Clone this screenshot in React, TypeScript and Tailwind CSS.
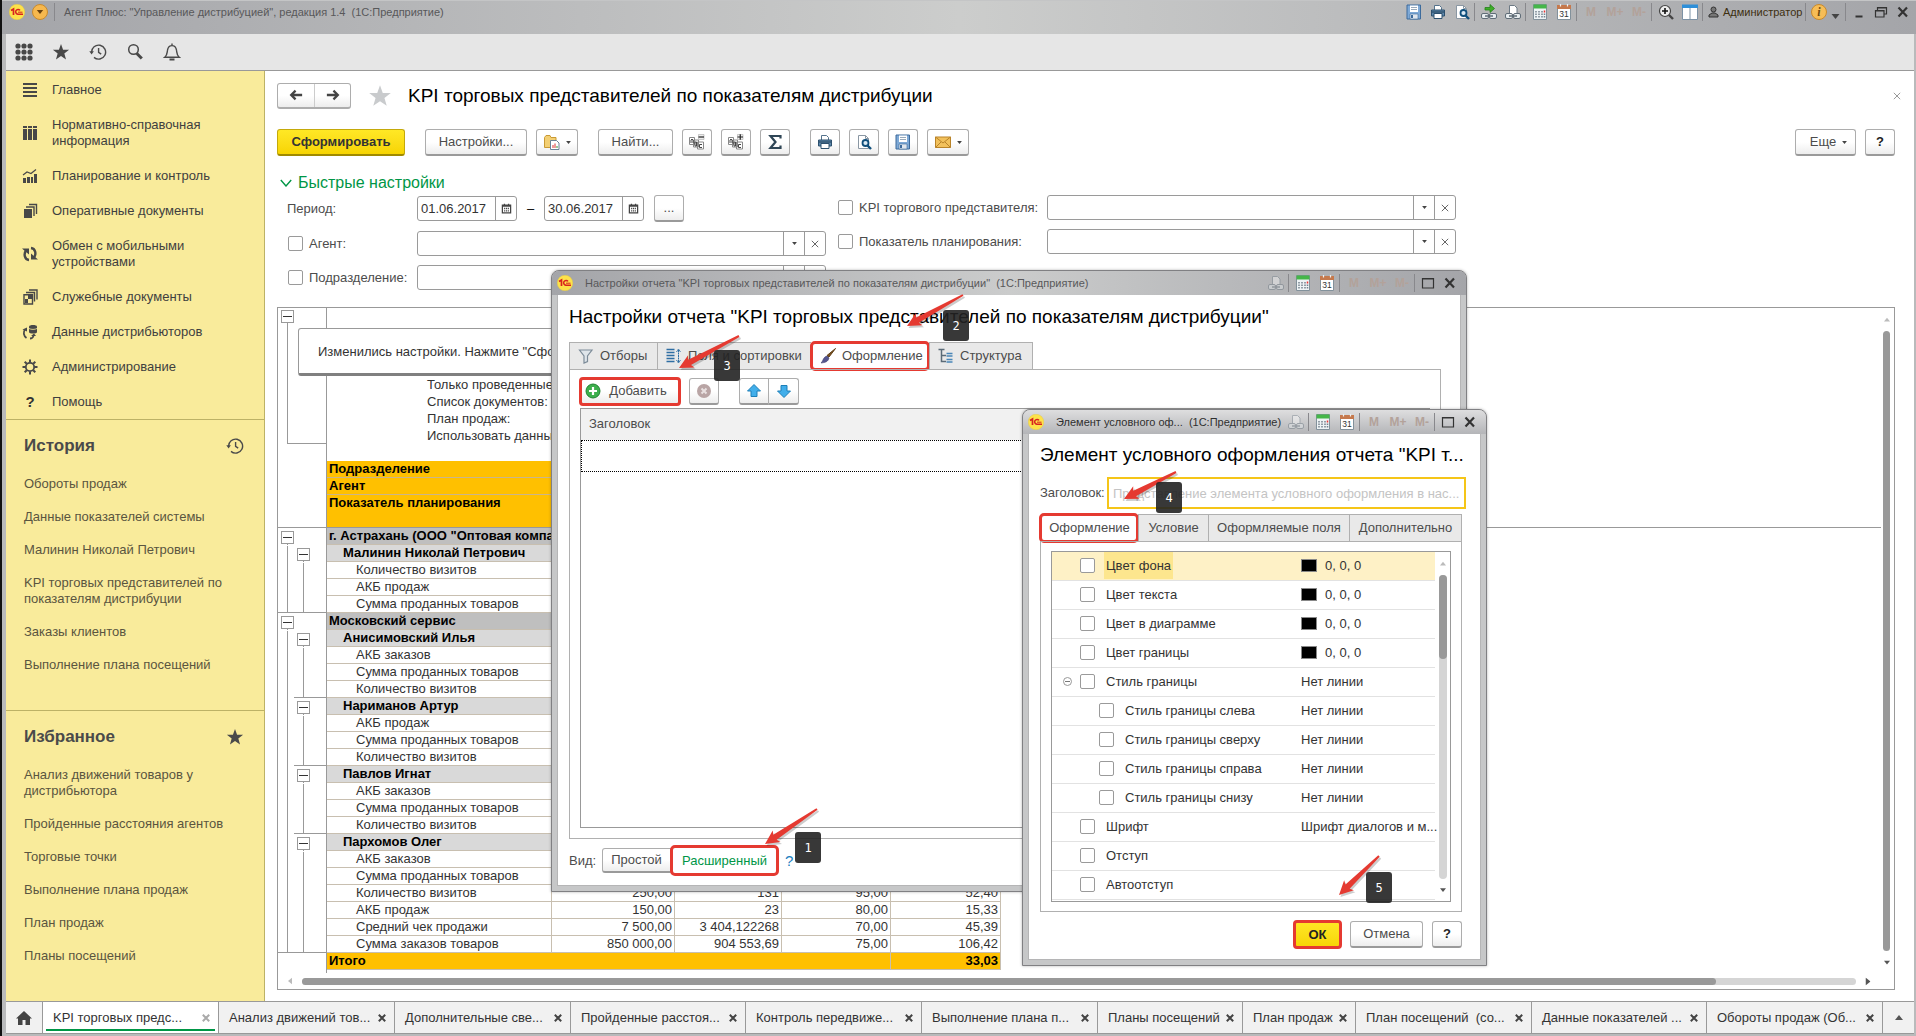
import { useState, type ReactNode } from "react";
import clsx from "clsx";

const NAV = [
  { label: "Главное", icon: "lines" },
  { label: "Нормативно-справочная информация", icon: "books" },
  { label: "Планирование и контроль", icon: "bars" },
  { label: "Оперативные документы", icon: "docs" },
  { label: "Обмен с мобильными устройствами", icon: "sync" },
  { label: "Служебные документы", icon: "docs2" },
  { label: "Данные дистрибьюторов", icon: "db" },
  { label: "Администрирование", icon: "gear" },
  { label: "Помощь", icon: "help" },
];

const HISTORY = [
  "Обороты продаж",
  "Данные показателей системы",
  "Малинин Николай Петрович",
  "KPI торговых представителей по показателям дистрибуции",
  "Заказы клиентов",
  "Выполнение плана посещений",
];

const FAVORITES = [
  "Анализ движений товаров у дистрибьютора",
  "Пройденные расстояния агентов",
  "Торговые точки",
  "Выполнение плана продаж",
  "План продаж",
  "Планы посещений",
];

type Tree = "" | "box" | "line" | "end";

interface ReportRow {
  a: Tree;
  b: Tree;
  level: 0 | 1 | 2;
  name: string;
  values?: string[];
}

const ROWS: ReportRow[] = [
  { a: "box", b: "", level: 0, name: 'г. Астрахань (ООО "Оптовая компания")' },
  { a: "line", b: "box", level: 1, name: "Малинин Николай Петрович" },
  { a: "line", b: "line", level: 2, name: "Количество визитов" },
  { a: "line", b: "line", level: 2, name: "АКБ продаж" },
  { a: "end", b: "end", level: 2, name: "Сумма проданных товаров" },
  { a: "box", b: "", level: 0, name: "Московский сервис" },
  { a: "line", b: "box", level: 1, name: "Анисимовский Илья" },
  { a: "line", b: "line", level: 2, name: "АКБ заказов" },
  { a: "line", b: "line", level: 2, name: "Сумма проданных товаров" },
  { a: "line", b: "end", level: 2, name: "Количество визитов" },
  { a: "line", b: "box", level: 1, name: "Нариманов Артур" },
  { a: "line", b: "line", level: 2, name: "АКБ продаж" },
  { a: "line", b: "line", level: 2, name: "Сумма проданных товаров" },
  { a: "line", b: "end", level: 2, name: "Количество визитов" },
  { a: "line", b: "box", level: 1, name: "Павлов Игнат" },
  { a: "line", b: "line", level: 2, name: "АКБ заказов" },
  { a: "line", b: "line", level: 2, name: "Сумма проданных товаров" },
  { a: "line", b: "end", level: 2, name: "Количество визитов" },
  { a: "line", b: "box", level: 1, name: "Пархомов Олег" },
  { a: "line", b: "line", level: 2, name: "АКБ заказов" },
  { a: "line", b: "line", level: 2, name: "Сумма проданных товаров" },
  { a: "line", b: "line", level: 2, name: "Количество визитов", values: ["250,00", "131", "95,00", "52,40"] },
  { a: "line", b: "line", level: 2, name: "АКБ продаж", values: ["150,00", "23", "80,00", "15,33"] },
  { a: "line", b: "line", level: 2, name: "Средний чек продажи", values: ["7 500,00", "3 404,122268", "70,00", "45,39"] },
  { a: "end", b: "end", level: 2, name: "Сумма заказов товаров", values: ["850 000,00", "904 553,69", "75,00", "106,42"] },
];

const APPEARANCE = [
  { label: "Цвет фона", value: "0, 0, 0", color: true, selected: true },
  { label: "Цвет текста", value: "0, 0, 0", color: true },
  { label: "Цвет в диаграмме", value: "0, 0, 0", color: true },
  { label: "Цвет границы", value: "0, 0, 0", color: true },
  { label: "Стиль границы", value: "Нет линии", group: true },
  { label: "Стиль границы слева", value: "Нет линии", child: true },
  { label: "Стиль границы сверху", value: "Нет линии", child: true },
  { label: "Стиль границы справа", value: "Нет линии", child: true },
  { label: "Стиль границы снизу", value: "Нет линии", child: true },
  { label: "Шрифт", value: "Шрифт диалогов и м..." },
  { label: "Отступ", value: "" },
  { label: "Автоотступ", value: "" },
];

const WINDOW_TABS = [
  { label: "KPI торговых предс...", width: "w-44", active: true },
  { label: "Анализ движений тов...", width: "w-44" },
  { label: "Дополнительные све...", width: "w-44" },
  { label: "Пройденные расстоя...", width: "w-[175px]" },
  { label: "Контроль передвиже...", width: "w-44" },
  { label: "Выполнение плана п...", width: "w-44" },
  { label: "Планы посещений", width: "w-[145px]" },
  { label: "План продаж", width: "w-[113px]" },
  { label: "План посещений\u00a0 (со...", width: "w-44" },
  { label: "Данные показателей ...", width: "w-[175px]" },
  { label: "Обороты продаж (Об...", width: "w-44" },
];

// tail and tip of each arrow, then the corner of its number plate
const CALLOUTS = [
  { n: 1, tail: [817, 809], tip: [765, 844], plate: [795, 832] },
  { n: 2, tail: [963, 295], tip: [907, 326], plate: [943, 310] },
  { n: 3, tail: [739, 336], tip: [679, 368], plate: [714, 350] },
  { n: 4, tail: [1176, 472], tip: [1124, 499], plate: [1156, 482] },
  { n: 5, tail: [1379, 856], tip: [1339, 895], plate: [1366, 872] },
];

/* ---------- icons ---------- */

function Logo() {
  return (
    <svg viewBox="0 0 16 16" className="size-4 shrink-0">
      <circle cx="8" cy="8" r="7.8" fill="#fde24a" stroke="#e3c545" strokeWidth="0.4" />
      <path d="M2 6.400 4.500 5v6" fill="none" stroke="#d8231f" strokeWidth="1.700" />
      <path d="M11 6.400A2.400 2.400 0 1 0 8.800 10.200H14" fill="none" stroke="#d8231f" strokeWidth="1.500" />
      <path d="M9 8.200h4.500" fill="none" stroke="#d8231f" />
    </svg>
  );
}

function Star({ className }: { className: string }) {
  return (
    <svg viewBox="0 0 20 20" className={clsx("shrink-0", className)} fill="currentColor">
      <path d="M10 1l2.3 6.4 6.7.2-5.3 4.1 1.9 6.5L10 14.4l-5.6 3.8 1.9-6.5L1 7.6l6.7-.2z" />
    </svg>
  );
}

function HistoryIcon({ className }: { className?: string }) {
  return (
    <svg viewBox="0 0 18 18" className={clsx("size-[18px] shrink-0", className)} fill="none" stroke="#4a4a4a" strokeWidth="1.4">
      <path d="M2.6 9.4A7 7 0 1 1 5 14.4" />
      <path d="M0.3 8.2h4.6L2.6 11.4z" fill="#4a4a4a" stroke="none" />
      <path d="M9.6 5v4.4l2.6 1.8" />
    </svg>
  );
}

function NavIcon({ name }: { name: string }) {
  if (name === "help") return <span className="w-4 shrink-0 text-center text-[15px] font-bold text-[#333]">?</span>;
  return (
    <svg viewBox="0 0 16 16" className="size-4 shrink-0" fill="#484848">
      {name === "lines" && <path d="M1 1h14v2H1zM1 5h14v2H1zM1 9h14v2H1zM1 13h14v2H1z" />}
      {name === "books" && <path d="M1 1h4v2H1zM6 1h4v2H6zM11 1h4v2h-4zM1 4h4v11H1zM6 4h4v11H6zM11 4h4v11h-4z" />}
      {name === "bars" && (
        <>
          <path d="M1 10h3v5H1zM5 9h3v6H5zM9 9h2v6H9zM12 6h3v9h-3z" />
          <path d="M1 7l4-3 4 1.500 5-4" fill="none" stroke="#484848" strokeWidth="1.2" />
        </>
      )}
      {name === "docs" && (
        <>
          <path d="M2 6h8v9H2z" />
          <path d="M4 4h8v9M7 1.500h7.500V11" fill="none" stroke="#484848" strokeWidth="1.4" />
        </>
      )}
      {name === "docs2" && (
        <>
          <path d="M2 5.700h8.500V15H2z" fill="none" stroke="#484848" strokeWidth="1.4" />
          <path d="M6 6h4v4H6zM3 10h3v4H3z" />
          <path d="M4 3.500h8.500v9M7 1h8v9.500" fill="none" stroke="#484848" strokeWidth="1.4" />
        </>
      )}
      {name === "sync" && (
        <>
          <path d="M7 14C2.500 13.500 1.500 8 4 4.500M9 2c4.500.5 5.500 6 3 9.500" fill="none" stroke="#484848" strokeWidth="2.4" />
          <path d="M0 2.500h7v6zM16 13.500H9v-6z" />
        </>
      )}
      {name === "db" && (
        <>
          <path d="M7 2.500C7 .5 15 .5 15 2.500V8c0 2-8 2-8 0z" />
          <path d="M7 4.500c2 1.200 6 1.200 8 0" fill="none" stroke="#f9eb9b" strokeWidth="0.8" />
          <path d="M4.500 14C1.500 12 1 8 3 5.500M8 14.500c2.500 0 3-1 3.500-2.500" fill="none" stroke="#484848" strokeWidth="1.8" />
          <path d="M0.500 5.500 5 3.500v4zM9 12h5l-2-2.500z" />
        </>
      )}
      {name === "gear" && (
        <>
          <circle cx="8" cy="8" r="4.200" fill="none" stroke="#484848" strokeWidth="1.8" />
          <path d="M8 .5v3M8 12.500v3M.5 8h3M12.500 8h3M2.700 2.700l2.100 2.100M11.200 11.200l2.100 2.100M2.700 13.300l2.100-2.100M11.200 4.800l2.100-2.100" stroke="#484848" strokeWidth="2" />
        </>
      )}
    </svg>
  );
}

function Glyph({ name, dim, className }: { name: string; dim?: boolean; className?: string }) {
  return (
    <svg viewBox="0 0 16 16" className={clsx("shrink-0", className ?? "size-4", dim && "opacity-40")} fill="none">
      {name === "disk" && (
        <>
          <path d="M1 1h13.500v14H1z" fill="#7ea9d6" stroke="#3d6b9c" />
          <path d="M4 1.500h8V8H4z" fill="#fff" />
          <path d="M5 3.500h6M5 5.500h6" stroke="#9ab" />
          <path d="M4 10h8v5H4z" fill="#dfe6ee" stroke="#3d6b9c" strokeWidth="0.6" />
          <path d="M5 11h2v3H5z" fill="#3d6b9c" />
        </>
      )}
      {name === "printer" && (
        <>
          <path d="M4.500 6V1.500h5l2 2V6" fill="#fff" stroke="#54728c" />
          <path d="M1.500 6h13v6h-13z" fill="#5f89ad" stroke="#2d506e" />
          <path d="M2 8h12" stroke="#1f3c55" />
          <path d="M4 9.500h8v5H4z" fill="#fff" stroke="#2d506e" />
        </>
      )}
      {name === "preview" && (
        <>
          <path d="M2.500 1.500h7l3 3v10h-10z" fill="#fff" stroke="#8a97a3" />
          <path d="M9.500 1.500v3h3" stroke="#8a97a3" />
          <circle cx="9.500" cy="9" r="3" stroke="#0f4f7c" strokeWidth="1.800" fill="#dbeaf5" />
          <path d="M11.500 11.500 15 15" stroke="#0f4f7c" strokeWidth="2.400" />
        </>
      )}
      {(name === "link" || name === "linkdoc") && (
        <>
          {name === "link" ? (
            <path d="M4 3.500h5V.5L13.500 4.500 9 8.500V6H4z" fill="#3fae2a" stroke="#23801a" strokeWidth="0.800" />
          ) : (
            <path d="M4.500 10V1.500h5l2.500 2.500v6" fill="#fff" stroke="#6d7a85" />
          )}
          <rect x=".5" y="9.500" width="7" height="5" rx="1.500" fill="#e8edf0" stroke="#5f6c77" />
          <rect x="8.500" y="9.500" width="7" height="5" rx="1.500" fill="#e8edf0" stroke="#5f6c77" />
          <path d="M4 12h8" stroke="#5f6c77" strokeWidth="1.500" />
        </>
      )}
      {name === "calc" && (
        <>
          <path d="M1.500.5h13v15h-13z" fill="#eef3f5" stroke="#82919b" />
          <path d="M1.500.5h13v4h-13z" fill="#45b649" />
          <path d="M4 7v7M7 7v7M10 7v7" stroke="#75838d" strokeWidth="1.500" strokeDasharray="1.500 1" />
          <path d="M12.500 6.500v2" stroke="#e33" strokeWidth="1.500" />
          <path d="M12.500 9.500v4" stroke="#75838d" strokeWidth="1.500" strokeDasharray="1.500 1" />
        </>
      )}
      {name === "calendar" && (
        <>
          <path d="M1.500 1.500h13v14h-13z" fill="#fff" stroke="#82919b" />
          <path d="M1 1h14v4H1z" fill="#c5794d" />
          <path d="M4.500 0v2.500M11.500 0v2.500" stroke="#eee" strokeWidth="1.200" />
          <text x="8" y="13" textAnchor="middle" fontSize="8.500" fill="#333">31</text>
        </>
      )}
      {name === "zoom" && (
        <>
          <circle cx="7" cy="7" r="5.500" fill="#eee" stroke="#444" strokeWidth="1.200" />
          <path d="M4 7h6M7 4v6" stroke="#111" strokeWidth="1.600" />
          <path d="M11 11l4 4" stroke="#444" strokeWidth="2.400" />
        </>
      )}
      {name === "panels" && (
        <>
          <path d="M.5 1.500h15v14H.5z" fill="#fff" stroke="#7d92a5" />
          <path d="M0 .5h16v3.500H0z" fill="#2f8fd8" />
          <path d="M8 4v11" stroke="#7d92a5" />
        </>
      )}
      {name === "folder" && (
        <>
          <path d="M.5 3.500 2 1.500h4l1 2h5v10H.5z" fill="#f3cf73" stroke="#c99a35" />
          <path d="M6.500 6.500h6l2.500 2.500v6.500H6.500z" fill="#fff" stroke="#6b8399" />
          <path d="M9 14v-3M11 14V9.500" stroke="#d33" />
          <path d="M13 14v-2" stroke="#393" />
        </>
      )}
      {(name === "collapse" || name === "expand") && (
        <>
          <path d="M.5 3.500h5v7h-5zM4.500 6h5v7h-5zM8.500 8h6v7h-6z" fill="#fff" stroke="#888" />
          <path d="M2 9V6l1-1 1 1v3M6 8v4h1.500V8zM13 10.500h-2.500v3H13" stroke="#333" strokeWidth="0.900" />
          <path d="M9.500.5h5.500v5H9.500z" fill="#eee" stroke="#aaa" strokeWidth="0.600" />
          <path d={name === "expand" ? "M9.500 3h5.500M12.250.3v5.400" : "M9.500 3h5.500"} stroke="#222" strokeWidth="1.200" />
        </>
      )}
      {name === "sigma" && <path d="M13.500 4.500V2H3.500l5 6-5 6h10v-2.500" stroke="#2f4656" strokeWidth="2.200" />}
      {name === "mail" && (
        <>
          <path d="M.5 3h15v10.500H.5z" fill="#f2c15c" stroke="#b98328" />
          <path d="M.5 3 8 9l7.500-6M.5 13.500 6 8M15.500 13.500 10 8" stroke="#b98328" />
        </>
      )}
      {name === "filter" && <path d="M1.500 2h12.500L9.500 8v5.500L6 15V8z" fill="#dfe5ea" stroke="#7d8c99" strokeWidth="1.200" />}
      {name === "fields" && (
        <>
          <path d="M.5 1.500h8M.5 4.500h8M.5 7.500h8M.5 10.500h8M.5 13.500h8" stroke="#2f6ea3" strokeWidth="1.600" />
          <path d="M12.500 2v12M10.500 4l2-3 2 3M10.500 12l2 3 2-3" stroke="#2f6ea3" strokeDasharray="2 0.500" />
        </>
      )}
      {name === "brush" && (
        <>
          <path d="M15.500.5 9 9 7 7.500z" fill="#7a5220" stroke="#5f3e14" />
          <path d="M7 8l2 2c-1 4-4 4.500-8 5 2-1.500 2-6 6-7z" fill="#55568f" stroke="#3a3b6b" strokeWidth="0.600" />
        </>
      )}
      {name === "tree" && (
        <>
          <path d="M.5 1.500h6M3.500 2v11.500H8M3.500 7.500H8" stroke="#5b6b78" strokeWidth="1.500" />
          <path d="M8.500 5.500h6M8.500 8h6M8.500 11.500h6M8.500 14h6" stroke="#4a86b8" strokeWidth="1.500" />
        </>
      )}
      {name === "add" && (
        <>
          <circle cx="8" cy="8" r="7" fill="#3daf4d" stroke="#1f8431" />
          <path d="M4 8h8M8 4v8" stroke="#fff" strokeWidth="2.200" />
        </>
      )}
      {name === "remove" && (
        <>
          <circle cx="8" cy="8" r="7" fill="#b9a5a5" />
          <path d="M5.500 5.500l5 5M10.500 5.500l-5 5" stroke="#e9e1e1" strokeWidth="2" />
        </>
      )}
      {name === "up" && <path d="M8 1.500 14.500 8H11v5.500H5V8H1.500z" fill="#41aeea" stroke="#1d7fb8" />}
      {name === "down" && <path d="M8 14.500 14.500 8H11V2.500H5V8H1.500z" fill="#41aeea" stroke="#1d7fb8" />}
      {name === "date" && (
        <>
          <path d="M2 3h12v11.500H2zM2 4.500h12M5 1v3M11 1v3" stroke="#444" strokeWidth="1.800" />
          <path d="M4.500 8h7M4.500 11.500h7" stroke="#444" strokeWidth="2" strokeDasharray="1.700 1" />
        </>
      )}
      {name === "close" && <path d="M3.500 3.500l8.500 9M12 3.500l-8.500 9" stroke="#333" strokeWidth="2.200" />}
      {name === "max" && <path d="M2.500 3.500h11v9.500h-11zM2 4h12" stroke="#333" strokeWidth="1.200" />}
      {name === "min" && <path d="M4.500 12.500h7" stroke="#333" strokeWidth="2" />}
      {name === "restore" && <path d="M4.500 6V3.500h9v6.500H11M4 4h10M2.500 6.500H11v6.500H2.500zM2 7h9" stroke="#333" strokeWidth="1.200" />}
    </svg>
  );
}

function Caret({ up, className }: { up?: boolean; className?: string }) {
  return (
    <svg viewBox="0 0 8 5" className={clsx("shrink-0", className ?? "h-[3px] w-[5px] text-[#444]")} fill="currentColor">
      <path d={up ? "M0 5h8L4 0z" : "M0 0h8L4 5z"} />
    </svg>
  );
}

function Cross({ className }: { className: string }) {
  return (
    <svg viewBox="0 0 8 8" className={clsx("size-2 shrink-0", className)} stroke="currentColor" fill="none">
      <path d="M.8.8l6.400 6.400M7.200.8.8 7.200" />
    </svg>
  );
}

/* ---------- controls ---------- */

function Button({ children, className, label }: { children: ReactNode; className?: string; label?: string }) {
  return (
    <button
      aria-label={label}
      className={clsx(
        "flex shrink-0 items-center justify-center rounded-[3px] border border-b-2 border-[#adadad] border-b-[#9a9a9a] bg-linear-to-b from-white from-50% to-[#ededed] whitespace-nowrap text-[#4c4c4c]",
        className
      )}
    >
      {children}
    </button>
  );
}

function Check({ id, className, label }: { id: string; className?: string; label?: string }) {
  return (
    <input
      id={id}
      type="checkbox"
      aria-label={label}
      className={clsx("size-[15px] shrink-0 appearance-none rounded-xs border border-[#9a9a9a] bg-white checked:bg-[#009646]", className)}
    />
  );
}

function ComboField({ id, label, labelWidth }: { id: string; label: string; labelWidth: string }) {
  return (
    <div className="flex h-[25px] items-center">
      <Check id={id + "-on"} label={label} />
      <label htmlFor={id} className={clsx("pl-1.5 whitespace-nowrap text-[#4c4c4c]", labelWidth)}>
        {label}
      </label>
      <div className="flex h-full w-[409px] rounded-[3px] border border-[#9a9a9a] bg-white">
        <input id={id} type="text" className="min-w-0 flex-1 px-1.5 outline-none" />
        <button aria-label="Выбрать" className="flex w-[21px] items-center justify-center border-l border-[#9a9a9a]">
          <Caret />
        </button>
        <button aria-label="Очистить" className="flex w-[21px] items-center justify-center border-l border-[#9a9a9a]">
          <Cross className="text-[#666]" />
        </button>
      </div>
    </div>
  );
}

function DateField({ label, value }: { label: string; value: string }) {
  return (
    <div className="flex h-[25px] w-[100px] rounded-[3px] border border-[#9a9a9a] bg-white">
      <input aria-label={label} defaultValue={value} className="w-[77px] px-[3px] text-[#333] outline-none" />
      <button aria-label="Календарь" className="flex flex-1 items-center justify-center border-l border-[#9a9a9a]">
        <Glyph name="date" className="size-[11px]" />
      </button>
    </div>
  );
}

function Sep() {
  return <span className="h-[18px] w-[3px] shrink-0 border-l border-[#88888c]" />;
}

function BarButton({ children, label }: { children: ReactNode; label: string }) {
  return (
    <button aria-label={label} className="flex h-5 w-6 shrink-0 items-center justify-center">
      {children}
    </button>
  );
}

function MemoryButtons() {
  return (
    <>
      {["M", "M+", "M-"].map((m) => (
        <button key={m} className="w-6 shrink-0 text-center text-[12px] font-bold text-[#b3a29a]">
          {m}
        </button>
      ))}
    </>
  );
}

function Dialog({ title, active, className, children }: { title: string; active?: boolean; className: string; children: ReactNode }) {
  return (
    <section
      className={clsx(
        "absolute flex flex-col rounded-t-lg border border-[#808083] bg-[#c6c7c8] px-[5px] pb-[5px] shadow-[0_0_3px_rgba(0,0,0,0.3)]",
        className
      )}
    >
      <header
        className={clsx(
          "-mx-[5px] flex h-6 shrink-0 items-center rounded-t-[7px] px-[5px]",
          active
            ? "bg-linear-to-b from-[#dededf] to-[#b4b5b8]"
            : "bg-linear-to-r from-[#a4a5a9] via-[#cbcccc] to-[#a4a5a9]"
        )}
      >
        <Logo />
        <span className={clsx("min-w-0 flex-1 pl-3 text-[11px] whitespace-nowrap", active ? "text-[#2f2f2f]" : "text-[#58585a]")}>{title}</span>
        <BarButton label="Печать">
          <Glyph name="linkdoc" dim />
        </BarButton>
        <Sep />
        <BarButton label="Калькулятор">
          <Glyph name="calc" />
        </BarButton>
        <BarButton label="Календарь">
          <Glyph name="calendar" />
        </BarButton>
        <Sep />
        <MemoryButtons />
        <Sep />
        <button aria-label="Развернуть" className="flex w-[22px] justify-center">
          <Glyph name="max" />
        </button>
        <button aria-label="Закрыть" className="flex w-[22px] justify-center">
          <Glyph name="close" />
        </button>
      </header>
      <div className="flex flex-1 flex-col border border-t-0 border-[#b5b5b6] bg-white">{children}</div>
    </section>
  );
}

/* ---------- page parts ---------- */

function TitleBar() {
  return (
    <header className="flex h-[34px] shrink-0 items-start border-t border-[#c4c5c6] bg-linear-to-r from-[#a4a5a9] via-[#cccdcc] to-[#a4a5a9] pt-px pr-0.5 pl-[7px]">
      <div className="flex h-5 min-w-0 flex-1 items-center">
        <Logo />
        <button aria-label="Главное меню" className="ml-[7px] flex size-4 items-center justify-center rounded-full border border-[#c98a2c] bg-[#f6b84e]">
          <Caret className="h-1 w-2 text-[#6b4310]" />
        </button>
        <span className="ml-1.5 h-[18px] w-1 border-l border-[#88888c]" />
        <span className="pl-1.5 text-[11px] whitespace-nowrap text-[#58585a]">
          Агент Плюс: "Управление дистрибуцией", редакция 1.4&nbsp; (1С:Предприятие)
        </span>
      </div>
      <div className="flex h-5 shrink-0 items-center">
        <BarButton label="Сохранить"><Glyph name="disk" /></BarButton>
        <BarButton label="Печать"><Glyph name="printer" /></BarButton>
        <BarButton label="Просмотр"><Glyph name="preview" /></BarButton>
        <Sep />
        <BarButton label="Перейти по ссылке"><Glyph name="link" /></BarButton>
        <BarButton label="Получить ссылку"><Glyph name="linkdoc" /></BarButton>
        <Sep />
        <BarButton label="Калькулятор"><Glyph name="calc" /></BarButton>
        <BarButton label="Календарь"><Glyph name="calendar" /></BarButton>
        <Sep />
        <MemoryButtons />
        <Sep />
        <BarButton label="Масштаб"><Glyph name="zoom" /></BarButton>
        <BarButton label="Панели"><Glyph name="panels" /></BarButton>
        <Sep />
        <button className="flex w-[100px] items-center gap-1 pl-[3px] text-[11px] text-[#3d2f10]">
          <svg viewBox="0 0 11 12" className="h-3 w-[11px] shrink-0" fill="#777" stroke="#333">
            <circle cx="5.500" cy="3.500" r="2.500" />
            <path d="M1 11V9l3-2h3l3 2v2z" />
          </svg>
          Администратор
        </button>
        <Sep />
        <button aria-label="О программе" className="flex w-[37px] items-center gap-1 pl-[3px]">
          <span className="flex size-4 items-center justify-center rounded-full border border-[#c98a2c] bg-[#f6bd57] font-['Liberation_Serif',serif] text-[12px] font-bold text-[#6b4a12] italic">i</span>
          <Caret className="mt-2 h-[5px] w-[9px] text-[#444]" />
        </button>
        <Sep />
        {["min", "restore", "close"].map((name) => (
          <button key={name} aria-label={name} className="flex w-[22px] justify-center">
            <Glyph name={name} />
          </button>
        ))}
      </div>
    </header>
  );
}

function SectionBar() {
  return (
    <div className="flex h-[37px] shrink-0 items-center gap-[19px] border-b border-[#999] bg-[#e6e6e6] pl-[9px] text-[#484848]">
      <button aria-label="Разделы">
        <svg viewBox="0 0 18 18" className="size-[18px]" fill="#484848">
          {[3, 9, 15].map((y) => [3, 9, 15].map((x) => <circle key={`${x}-${y}`} cx={x} cy={y} r="2.600" />))}
        </svg>
      </button>
      <button aria-label="Избранное"><Star className="size-[18px]" /></button>
      <button aria-label="История"><HistoryIcon /></button>
      <button aria-label="Поиск">
        <svg viewBox="0 0 18 18" className="size-[18px]" fill="none" stroke="#484848">
          <circle cx="7.500" cy="6.500" r="4.800" strokeWidth="1.500" />
          <path d="M10.800 10.500l5 5" strokeWidth="3" />
        </svg>
      </button>
      <button aria-label="Оповещения">
        <svg viewBox="0 0 18 18" className="size-[18px]" fill="none" stroke="#484848" strokeWidth="1.400">
          <path d="M1.800 14.200c2.700-2.200 2.200-4.400 2.700-7C5 4 7 2.600 9 2.600s4 1.400 4.500 4.600c.5 2.600 0 4.800 2.700 7zM9 .5v2" />
          <path d="M6.500 16.500h5" strokeWidth="2" />
        </svg>
      </button>
    </div>
  );
}

function SideList({ title, items, icon, className }: { title: string; items: string[]; icon: ReactNode; className?: string }) {
  return (
    <div className={clsx("border-t border-[#bdb266] px-[18px] pt-4", className)}>
      <div className="flex items-center justify-between pr-0.5 text-[#4a4a4a]">
        <h2 className="text-[17px] leading-5 font-bold">{title}</h2>
        {icon}
      </div>
      <ul className="pt-[11px] text-[#5a5540]">
        {items.map((item) => (
          <li key={item} className="pt-[9px] pr-2 pb-2 leading-4">
            <a href="#">{item}</a>
          </li>
        ))}
      </ul>
    </div>
  );
}

function Sidebar() {
  return (
    <aside className="flex w-[259px] shrink-0 flex-col border-r border-[#bdb266] bg-[#f9eb9b]">
      <nav className="h-[348px] pt-px">
        {NAV.map((item) => (
          <a key={item.label} href="#" className="flex items-center gap-[14px] pt-2.5 pr-8 pb-[9px] pl-4 leading-4 text-[#3f3f3f]">
            <NavIcon name={item.icon} />
            {item.label}
          </a>
        ))}
      </nav>
      <SideList title="История" items={HISTORY} icon={<HistoryIcon />} className="h-[291px]" />
      <SideList title="Избранное" items={FAVORITES} icon={<Star className="size-[18px]" />} />
    </aside>
  );
}

function TreeCell({ kind, last }: { kind: Tree; last?: boolean }) {
  return (
    <td className={clsx("p-0", last && "border-r border-[#999]", kind === "end" && "border-b border-b-[#999]")}>
      <div className="flex h-4 flex-col">
        {kind === "box" && (
          <>
            <button aria-label="Свернуть" className="mt-0.5 ml-[3px] flex size-[13px] shrink-0 items-center justify-center border border-[#999] bg-white">
              <span className="h-px w-[9px] bg-[#333]" />
            </button>
            <span className="ml-[9px] flex-1 border-l border-[#999]" />
          </>
        )}
        {(kind === "line" || kind === "end") && <span className="ml-[9px] h-[17px] shrink-0 border-l border-[#999]" />}
      </div>
    </td>
  );
}

function Report() {
  return (
    <div className="relative flex min-h-0 flex-1 flex-col border border-[#999] bg-white">
      <div className="flex min-h-0 flex-1">
        <div className="min-w-0 flex-1">
          <div className="flex h-[153px]">
            <div className="flex w-[49px] flex-col border-r border-[#999] pt-0.5 pl-[3px]">
              <button aria-label="Свернуть" className="flex size-[13px] shrink-0 items-center justify-center border border-[#999] bg-white">
                <span className="h-px w-[9px] bg-[#333]" />
              </button>
              <span className="ml-1.5 h-[121px] border-b border-l border-[#999]" />
            </div>
            <div className="pt-[68px] pl-[100px] leading-[17px] whitespace-nowrap text-[#333]">
              <p>Только проведенные документы: Да</p>
              <p>Список документов:</p>
              <p>План продаж:</p>
              <p>Использовать данные: Да</p>
            </div>
          </div>
          <table className="w-full table-fixed border-separate border-spacing-0 leading-4 text-[#333]">
            <colgroup>
              <col className="w-4" />
              <col className="w-[33px]" />
              <col className="w-[225px]" />
              <col className="w-[123px]" />
              <col className="w-[107px]" />
              <col className="w-[109px]" />
              <col className="w-[110px]" />
              <col />
            </colgroup>
            <thead>
              {["Подразделение", "Агент", "Показатель планирования"].map((name, i) => (
                <tr key={name}>
                  <td colSpan={2} className={clsx("border-r border-[#999] p-0", i === 2 && "border-b")} />
                  <th
                    colSpan={5}
                    className={clsx(
                      "border-b bg-[#ffc000] px-0.5 py-0 text-left align-top font-bold text-black",
                      i === 2 ? "h-[33px] border-[#999]" : "h-[17px] border-[#c9b58c]"
                    )}
                  >
                    {name}
                  </th>
                  <td className={clsx("p-0", i === 2 && "border-b border-[#999]")} />
                </tr>
              ))}
            </thead>
            <tbody>
              {ROWS.map((row, i) => (
                <tr key={i}>
                  <TreeCell kind={row.a} />
                  <TreeCell kind={row.b} last />
                  <td
                    className={clsx(
                      "h-[17px] border-r border-b border-[#c8bfb0] py-0 whitespace-nowrap",
                      row.level === 0 && "bg-[#bfbfbf] pl-0.5 font-bold text-black",
                      row.level === 1 && "bg-[#d9d9d9] pl-4 font-bold text-black",
                      row.level === 2 && "pl-[29px]"
                    )}
                  >
                    {row.name}
                  </td>
                  {[0, 1, 2, 3].map((c) => (
                    <td
                      key={c}
                      className={clsx(
                        "border-r border-b border-[#c8bfb0] px-0.5 py-0 text-right",
                        row.level === 0 && "bg-[#bfbfbf]",
                        row.level === 1 && "bg-[#d9d9d9]"
                      )}
                    >
                      {row.values?.[c]}
                    </td>
                  ))}
                  <td />
                </tr>
              ))}
              <tr className="font-bold text-black">
                <td colSpan={2} className="border-r border-[#999] p-0" />
                <td colSpan={4} className="h-[17px] border-r border-b border-[#c8bfb0] bg-[#ffc000] px-0.5 py-0">
                  Итого
                </td>
                <td className="border-r border-b border-[#c8bfb0] bg-[#ffc000] px-0.5 py-0 text-right">33,03</td>
                <td />
              </tr>
              <tr>
                <td colSpan={2} className="h-[3px] border-r border-[#999] p-0" />
              </tr>
            </tbody>
          </table>
        </div>
        <div className="flex w-[13px] shrink-0 flex-col items-center pt-[9px] pr-0.5">
          <Caret up className="h-[5px] w-1.5 text-[#bbb]" />
          <span className="mt-[9px] w-[7px] flex-1 rounded-full bg-[#999]" />
          <Caret className="my-[9px] h-[5px] w-1.5 text-[#555]" />
        </div>
      </div>
      <div className="flex h-[15px] shrink-0 items-center pr-[22px] pb-px pl-2">
        <Caret className="h-1 w-2 rotate-90 text-[#bbb]" />
        <span className="mx-2 flex h-[7px] flex-1 rounded-full bg-[#d5d5d5]">
          <span className="w-[91%] rounded-full bg-[#999]" />
        </span>
        <Caret className="h-[5px] w-2 -rotate-90 text-[#555]" />
      </div>
      {/* floating notice over the sheet */}
      <div className="absolute top-5 left-5 h-12 w-[420px] rounded-[3px] border border-b-[3px] border-[#999] border-b-[#808080] bg-white pt-[15px] pl-[19px] whitespace-nowrap text-[#333]">
        Изменились настройки. Нажмите "Сформировать" для обновления.
      </div>
    </div>
  );
}

function ReportPage() {
  return (
    <main className="flex min-w-0 flex-1 flex-col bg-white pt-[11px] pr-[19px] pb-[11px] pl-3">
      <div className="flex h-[27px] items-center">
        <div className="flex h-[26px] rounded-[3px] border border-b-2 border-[#adadad] bg-linear-to-b from-white from-50% to-[#ededed]">
          {["M15 8H3M7.500 3 2.500 8l5 5", "M1 8h12M8.500 3l5 5-5 5"].map((d, i) => (
            <button key={d} aria-label={i ? "Вперед" : "Назад"} className={clsx("flex w-9 items-center justify-center", i && "border-l border-[#ccc]")}>
              <svg viewBox="0 0 16 16" className="size-3.5" fill="none" stroke="#444" strokeWidth="2.600">
                <path d={d} />
              </svg>
            </button>
          ))}
        </div>
        <Star className="ml-[17px] size-6 text-[#c9cbcd]" />
        <h1 className="min-w-0 flex-1 pt-px pl-4 text-[19px] whitespace-nowrap text-black">KPI торговых представителей по показателям дистрибуции</h1>
        <button aria-label="Закрыть" className="-mr-1.5">
          <Cross className="text-[#999]" />
        </button>
      </div>

      <div className="mt-5 flex h-[27px]">
        <button className="h-full w-32 rounded-[3px] border border-b-2 border-[#c4a90a] border-b-[#a08a00] bg-linear-to-b from-[#ffe825] to-[#f7d400] font-bold text-[#333]">
          Сформировать
        </button>
        <Button className="ml-5 w-[102px]">Настройки...</Button>
        <Button className="ml-[9px] w-[42px] gap-1.5" label="Варианты отчета">
          <Glyph name="folder" />
          <Caret />
        </Button>
        <Button className="ml-5 w-[75px]">Найти...</Button>
        <Button className="ml-[9px] w-[30px]" label="Свернуть группы"><Glyph name="collapse" /></Button>
        <Button className="ml-[9px] w-[30px]" label="Развернуть группы"><Glyph name="expand" /></Button>
        <Button className="ml-[9px] w-[30px]" label="Сумма"><Glyph name="sigma" /></Button>
        <Button className="ml-5 w-[30px]" label="Печать"><Glyph name="printer" /></Button>
        <Button className="ml-[9px] w-[30px]" label="Просмотр"><Glyph name="preview" /></Button>
        <Button className="ml-[9px] w-[30px]" label="Сохранить"><Glyph name="disk" /></Button>
        <Button className="ml-[9px] w-[42px] gap-1.5" label="Отправить">
          <Glyph name="mail" />
          <Caret />
        </Button>
        <Button className="ml-auto w-[61px] gap-1.5 pl-1.5">
          Еще
          <Caret />
        </Button>
        <Button className="ml-[9px] w-[30px] font-bold text-[#222]">?</Button>
      </div>

      <button className="mt-[17px] flex h-5 items-center gap-1.5 self-start pl-[3px] text-[16px] text-[#009646]">
        <svg viewBox="0 0 12 8" className="h-2 w-3" fill="none" stroke="currentColor" strokeWidth="1.400">
          <path d="M.8 1 6 7l5.200-6" />
        </svg>
        Быстрые настройки
      </button>

      <div className="flex gap-3 pt-0.5">
        <div className="flex flex-col gap-[9px] pl-[11px]">
          <div className="-ml-px flex h-[27px] items-center">
            <span className="w-[130px] text-[#4c4c4c]">Период:</span>
            <DateField label="Начало периода" value="01.06.2017" />
            <span className="w-[27px] text-center">–</span>
            <DateField label="Конец периода" value="30.06.2017" />
            <Button className="ml-[10px] h-[27px] w-[30px]">...</Button>
          </div>
          <ComboField id="agent" label="Агент:" labelWidth="w-[114px]" />
          <ComboField id="department" label="Подразделение:" labelWidth="w-[114px]" />
        </div>
        <div className="flex flex-col gap-[9px]">
          <ComboField id="kpi" label="KPI торгового представителя:" labelWidth="w-[194px]" />
          <ComboField id="indicator" label="Показатель планирования:" labelWidth="w-[194px]" />
        </div>
      </div>
      <div className="flex min-h-0 flex-1 flex-col pt-[17px]">
        <Report />
      </div>
    </main>
  );
}

function WindowTabs() {
  return (
    <footer className="flex h-[33px] shrink-0 border-y border-[#999] bg-[#f1f1f1] text-[#333]">
      <button aria-label="Начальная страница" className="flex w-9 shrink-0 items-center justify-center">
        <svg viewBox="0 0 16 14" className="h-3.5 w-4" fill="#444">
          <path d="M8 0 0 7.500h2V14h4.500V9h3v5H14V7.500h2z" />
        </svg>
      </button>
      {WINDOW_TABS.map((tab) => (
        <div key={tab.label} className={clsx("relative flex items-center border-l border-[#999] pr-2 pl-2.5", tab.width, tab.active && "bg-white")}>
          <a href="#" className="flex-1 whitespace-nowrap">{tab.label}</a>
          <button aria-label="Закрыть">
            <Cross className={tab.active ? "stroke-2 text-[#aaa]" : "stroke-2 text-[#444]"} />
          </button>
          {tab.active && <span className="absolute inset-x-[3px] bottom-0.5 h-0.5 bg-[#009646]" />}
        </div>
      ))}
      <button aria-label="Список окон" className="flex flex-1 items-center justify-center border-l border-[#999]">
        <Caret up className="h-[5px] w-2.5 text-[#555]" />
      </button>
    </footer>
  );
}

const MARK = "outline-3 -outline-offset-2 outline-[#e53a31]";

function SettingsDialog() {
  const [tab, setTab] = useState("Оформление");
  const tabs = [
    { label: "Отборы", icon: "filter", width: "w-[88px]" },
    { label: "Поля и сортировки", icon: "fields", width: "w-[154px]" },
    { label: "Оформление", icon: "brush", width: "w-[118px]" },
    { label: "Структура", icon: "tree", width: "w-[104px]" },
  ];
  return (
    <Dialog
      title={'Настройки отчета "KPI торговых представителей по показателям дистрибуции"\u00a0 (1С:Предприятие)'}
      className="top-[270px] left-[551px] h-[622px] w-[916px]"
    >
      <div className="flex flex-1 flex-col pt-2 pr-[19px] pb-[11px] pl-[11px]">
        <h2 className="text-[19px] leading-7 whitespace-nowrap text-black">Настройки отчета "KPI торговых представителей по показателям дистрибуции"</h2>
        <div className="mt-[11px] flex h-7" role="tablist">
          {tabs.map((t) => (
            <button
              key={t.label}
              role="tab"
              aria-selected={tab === t.label}
              onClick={() => setTab(t.label)}
              className={clsx(
                "flex items-center gap-1.5 border border-r-0 border-[#b0b0b0] pl-2 whitespace-nowrap text-[#4c4c4c] last:border-r",
                t.width,
                tab === t.label ? clsx("rounded bg-white", MARK) : "bg-[#e9e9e9]"
              )}
            >
              <Glyph name={t.icon} />
              {t.label}
            </button>
          ))}
        </div>
        <div className="-mt-px flex flex-1 flex-col border border-[#b0b0b0] p-[10px] pt-[7px]">
          <div className="flex h-[29px] items-center">
            <Button className={clsx("h-[27px] w-[100px] gap-2 pr-2", MARK)}>
              <Glyph name="add" />
              Добавить
            </Button>
            <Button className="ml-[9px] h-[27px] w-[30px]" label="Удалить"><Glyph name="remove" /></Button>
            <Button className="ml-5 h-[27px] w-[30px] rounded-r-none" label="Вверх"><Glyph name="up" /></Button>
            <Button className="-ml-px h-[27px] w-[31px] rounded-l-none" label="Вниз"><Glyph name="down" /></Button>
          </div>
          <div className="mt-0.5 flex-1 border border-[#999]">
            <div className="h-[31px] bg-[#f1f1f1] pl-2 leading-[30px] text-[#4c4c4c]">Заголовок</div>
            <div className="h-8 border border-dotted border-black" />
          </div>
        </div>
        <div className="mt-2 flex h-[27px] items-center">
          <span className="w-[33px] text-[#4c4c4c]">Вид:</span>
          <Button className="h-[25px] w-[69px] rounded-r-none">Простой</Button>
          <button className={clsx("h-[29px] w-[107px] rounded bg-white text-[#009646]", MARK)}>Расширенный</button>
          <a href="#" className="pl-[7px] text-[15px] text-[#1a7fc1]">?</a>
        </div>
      </div>
    </Dialog>
  );
}

function ElementDialog() {
  const [tab, setTab] = useState("Оформление");
  const tabs = [
    { label: "Оформление", width: "w-[98px]" },
    { label: "Условие", width: "w-[70px]" },
    { label: "Оформляемые поля", width: "w-[141px]" },
    { label: "Дополнительно", width: "flex-1" },
  ];
  return (
    <Dialog active title={"Элемент условного оф...\u00a0 (1С:Предприятие)"} className="top-[409px] left-[1022px] h-[557px] w-[465px]">
      <div className="flex flex-1 flex-col pt-[7px] pr-[18px] pb-[11px] pl-[11px]">
        <h2 className="text-[19px] leading-7 whitespace-nowrap text-black">Элемент условного оформления отчета "KPI т...</h2>
        <div className="mt-2 -mr-1 flex h-8 items-center">
          <label htmlFor="element-title" className="w-[67px] text-[#4c4c4c]">
            Заголовок:
          </label>
          <input
            id="element-title"
            placeholder="Представление элемента условного оформления в нас..."
            className="h-full min-w-0 flex-1 border-2 border-[#f5c518] px-1 outline-none placeholder:text-[#c4c4c4]"
          />
        </div>
        <div className="mt-[5px] flex h-7" role="tablist">
          {tabs.map((t) => (
            <button
              key={t.label}
              role="tab"
              aria-selected={tab === t.label}
              onClick={() => setTab(t.label)}
              className={clsx(
                "border border-r-0 border-[#b0b0b0] text-center whitespace-nowrap text-[#4c4c4c] last:border-r",
                t.width,
                tab === t.label ? clsx("rounded bg-white", MARK) : "bg-[#e9e9e9]"
              )}
            >
              {t.label}
            </button>
          ))}
        </div>
        <div className="-mt-px flex flex-1 flex-col border border-[#b0b0b0] px-2.5 py-[9px]">
          <div className="flex flex-1 border border-[#999]">
            <ul className="min-w-0 flex-1 text-[#333]">
              {APPEARANCE.map((row, i) => (
                <li key={row.label} className="flex h-[29px] items-center border-b border-[#e2e2e2] pb-px first:bg-[#fef1c6]">
                  <span className="flex w-7 shrink-0 justify-end pr-2">
                    {row.group && (
                      <button aria-label="Свернуть" className="flex size-[9px] items-center justify-center rounded-full border border-[#999]">
                        <span className="h-px w-[5px] bg-[#777]" />
                      </button>
                    )}
                  </span>
                  <Check id={`look-${i}`} className={row.child ? "ml-[19px]" : ""} />
                  <label
                    htmlFor={`look-${i}`}
                    className={clsx("ml-[9px] flex h-full items-center px-0.5 whitespace-nowrap", row.selected && "bg-[#fde68e]")}
                  >
                    {row.label}
                  </label>
                  <span className="ml-auto flex w-[134px] items-center gap-2 whitespace-nowrap">
                    {row.color && <span className="h-[13px] w-4 border border-[#888] bg-black" />}
                    {row.value}
                  </span>
                </li>
              ))}
            </ul>
            <div className="flex w-[15px] shrink-0 flex-col items-center py-[9px]">
              <Caret up className="h-[5px] w-1.5 text-[#bbb]" />
              <span className="my-[9px] w-2 flex-1 rounded-full bg-[#d5d5d5]">
                <span className="block h-[84px] rounded-full bg-[#999]" />
              </span>
              <Caret className="h-1 w-1.5 text-[#555]" />
            </div>
          </div>
        </div>
        <div className="mt-[9px] flex h-[27px] justify-end gap-[9px]">
          <button className={clsx("w-[47px] rounded-[3px] bg-linear-to-b from-[#ffe825] to-[#f7d400] font-bold text-[#222]", MARK)}>ОК</button>
          <Button className="w-[73px]">Отмена</Button>
          <Button className="w-[30px] font-bold text-[#222]">?</Button>
        </div>
      </div>
    </Dialog>
  );
}

function arrowPoints([x1, y1]: number[], [x2, y2]: number[]) {
  const len = Math.hypot(x2 - x1, y2 - y1);
  const ux = (x2 - x1) / len;
  const uy = (y2 - y1) / len;
  // [distance from the tip, offset across the shaft]
  const outline = [[0, 0], [14, 7], [12, 3], [len, 1], [len, -1], [12, -3], [14, -7]];
  return outline.map(([d, o]) => `${x2 - ux * d - uy * o},${y2 - uy * d + ux * o}`).join(" ");
}

function Callouts() {
  return (
    <div className="pointer-events-none absolute inset-y-0 right-0 -left-0.5">
      <svg className="size-full">
        {CALLOUTS.map((c) => (
          <g key={c.n}>
            <polygon points={arrowPoints(c.tail, c.tip)} fill="#000" opacity="0.2" transform="translate(1.500 2)" />
            <polygon points={arrowPoints(c.tail, c.tip)} fill="#e53a31" />
          </g>
        ))}
      </svg>
      {CALLOUTS.map((c) => (
        <span
          key={c.n}
          style={{ left: c.plate[0], top: c.plate[1] }}
          className="absolute flex h-[31px] w-[26px] items-center justify-center rounded-[3px] bg-[#222]/90 font-['DejaVu_Sans_Mono',monospace] text-[12px] text-white"
        >
          {c.n}
        </span>
      ))}
    </div>
  );
}

export default function App() {
  return (
    <div className="relative flex min-h-screen flex-col overflow-hidden border-l-2 border-[#111] bg-[#b9babb] font-['Liberation_Sans',Arial,sans-serif] text-[13px] leading-4">
      <TitleBar />
      <div className="flex flex-1 flex-col pr-0.5 pb-0.5 pl-1">
        <SectionBar />
        <div className="flex flex-1">
          <Sidebar />
          <ReportPage />
        </div>
        <WindowTabs />
      </div>
      <div className="absolute inset-y-0 -left-0.5">
        <SettingsDialog />
        <ElementDialog />
      </div>
      <Callouts />
    </div>
  );
}
